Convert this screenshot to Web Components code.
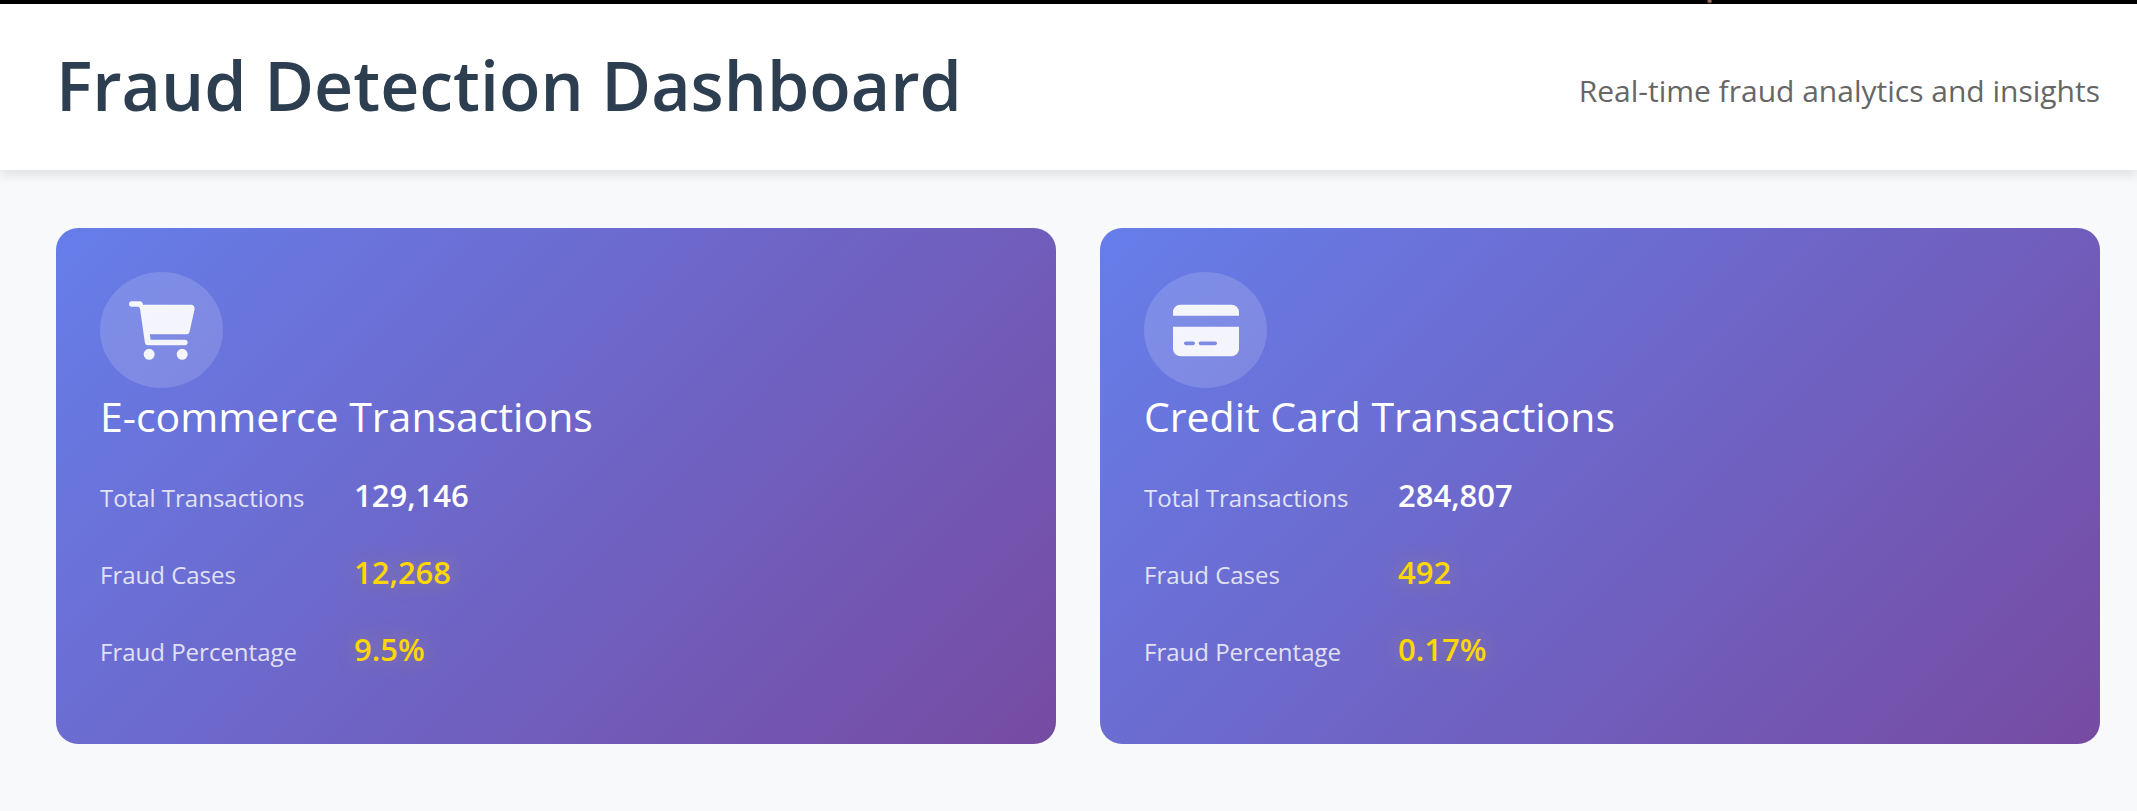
<!DOCTYPE html>
<html lang="en">
<head>
<meta charset="utf-8">
<title>Fraud Detection Dashboard</title>
<style>
  body { margin: 0; background: #f8f9fb; font-family: "Segoe UI", "Open Sans", "Noto Sans", sans-serif; }
</style>
</head>
<body>
<fraud-dashboard></fraud-dashboard>

<template id="dashboard-header">
  <style>
    :host { display: flex; justify-content: space-between; align-items: center; box-sizing: border-box; min-height: 166px; padding: 0 37px 4px 56px;
      background: #fff; box-shadow: 0 5px 11px rgba(0, 0, 0, .1); }
    h1 { margin: 0; font-size: 68px; line-height: 96px; font-weight: 600; color: #2c3e50; }
    p { margin: 0; padding-top: 12px; font-size: 30px; line-height: 44px; color: #666; }
  </style>
  <h1><slot></slot></h1>
  <p><slot name="tagline"></slot></p>
</template>

<template id="summary-card">
  <style>
    :host { display: flex; flex-direction: column; align-items: flex-start; box-sizing: border-box; min-height: 516px; padding: 44px; border-radius: 22px;
      background: linear-gradient(135deg, #667eea 0%, #764ba2 100%); color: #fff; }
    .icon { display: grid; place-items: center; width: 123px; height: 116px; border-radius: 50%; background: rgba(255, 255, 255, .15); }
    ::slotted(svg) { width: 66px; height: 59px; fill: #fff; opacity: .92; }
    h2 { margin: 0 0 29px; font-size: 41px; line-height: 56px; font-weight: 400; }
    .stats { display: flex; flex-direction: column; gap: 30px; }
  </style>
  <div class="icon"><slot name="icon"></slot></div>
  <h2><slot name="title"></slot></h2>
  <div class="stats"><slot></slot></div>
</template>

<template id="stat-row">
  <style>
    :host { display: grid; grid-template-columns: 254px auto; align-items: baseline; line-height: 44px; }
    .label { font-size: 24px; opacity: .8; }
    .value { font-size: 31px; font-weight: 600; }
    :host([alert]) .value { color: gold; text-shadow: 0 0 22px rgba(255, 215, 0, .3); }
  </style>
  <span class="label"><slot name="label"></slot></span>
  <span class="value"><slot></slot></span>
</template>

<template id="fraud-dashboard">
  <style>
    :host { display: block; }
    .strip { height: 4px; background: radial-gradient(circle at 80% 1px, #a87468 1px, transparent 3px), #000; }
    main { display: grid; grid-template-columns: 1fr 1fr; gap: 44px; padding: 58px 37px 58px 56px; }
  </style>
  <div class="strip"></div>
  <dashboard-header>Fraud Detection Dashboard<span slot="tagline">Real-time fraud analytics and insights</span></dashboard-header>
  <main>
    <summary-card>
      <svg slot="icon" viewBox="0 0 576 512" aria-hidden="true"><path d="M24 0H96Q119 0 122 32H541C562 32 576 46 572 72L530 260Q525 288 503 288H182L188 336H488a24 24 0 0 1 0 48H166Q141 384 138 358L98 80Q95 48 80 48H24A24 24 0 0 1 24 0zM128 464a48 48 0 1 1 96 0 48 48 0 1 1-96 0zm336-48a48 48 0 1 1 0 96 48 48 0 1 1 0-96z"/></svg>
      <span slot="title">E-commerce Transactions</span>
      <stat-row><span slot="label">Total Transactions</span>129,146</stat-row>
      <stat-row alert><span slot="label">Fraud Cases</span>12,268</stat-row>
      <stat-row alert><span slot="label">Fraud Percentage</span>9.5%</stat-row>
    </summary-card>
    <summary-card>
      <svg slot="icon" viewBox="0 0 576 512" aria-hidden="true"><path d="M64 32C28.700 32 0 60.700 0 96v32H576V96c0-35.300-28.700-64-64-64H64zM576 224H0V416c0 35.300 28.700 64 64 64H512c35.300 0 64-28.700 64-64V224zM112 352h64c8.800 0 16 7.200 16 16s-7.200 16-16 16H112c-8.800 0-16-7.200-16-16s7.200-16 16-16zm112 16c0-8.800 7.200-16 16-16H368c8.800 0 16 7.200 16 16s-7.200 16-16 16H240c-8.800 0-16-7.200-16-16z"/></svg>
      <span slot="title">Credit Card Transactions</span>
      <stat-row><span slot="label">Total Transactions</span>284,807</stat-row>
      <stat-row alert><span slot="label">Fraud Cases</span>492</stat-row>
      <stat-row alert><span slot="label">Fraud Percentage</span>0.17%</stat-row>
    </summary-card>
  </main>
</template>

<script>
  class TemplateElement extends HTMLElement {
    constructor() {
      super();
      const template = document.getElementById(this.localName);
      this.attachShadow({ mode: "open" }).append(template.content.cloneNode(true));
    }
  }
  customElements.define("dashboard-header", class extends TemplateElement {});
  customElements.define("stat-row", class extends TemplateElement {});
  customElements.define("summary-card", class extends TemplateElement {});
  customElements.define("fraud-dashboard", class extends TemplateElement {});
</script>
</body>
</html>
